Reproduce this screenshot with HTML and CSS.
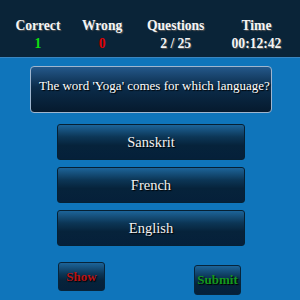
FILE: index.html
```html
<!DOCTYPE html>
<html>
<head>
<meta charset="utf-8">
<link rel="stylesheet" href="styles.css">
</head>
<body>
<div class="screen">
  <div class="stats">
    <table class="stats-table">
      <tr class="labels">
        <td>Correct</td><td>Wrong</td><td>Questions</td><td>Time</td>
      </tr>
      <tr class="values">
        <td class="good">1</td><td class="bad">0</td><td>2 / 25</td><td>00:12:42</td>
      </tr>
    </table>
  </div>
  <div class="question">The word 'Yoga' comes for which language?</div>
  <div class="options">
    <div class="option">Sanskrit</div>
    <div class="option">French</div>
    <div class="option">English</div>
  </div>
  <div class="actions">
    <div class="btn show">Show</div>
    <div class="btn submit">Submit</div>
  </div>
</div>
</body>
</html>
```
FILE: styles.css
```css
html, body {
  margin: 0;
  padding: 0;
}
body {
  background: #0f75bb;
  font-family: "Liberation Serif", "Times New Roman", serif;
  width: 300px;
  height: 300px;
  overflow: hidden;
}
.screen {
  width: 300px;
  height: 300px;
}
.stats {
  background: #0a2438;
  height: 58px;
  box-sizing: border-box;
  padding: 17px 6px 0 4px;
  border-bottom: 1px solid #3a86c0;
}
.stats-table {
  width: 100%;
  border-collapse: collapse;
}
.stats-table td {
  padding: 0;
  text-align: center;
  font-weight: bold;
  font-size: 13.6px;
  line-height: 18px;
  color: #f4f4f4;
  text-shadow: 1px 1px 1px #555;
}
.stats-table .good { color: #10e010; text-shadow: none; }
.stats-table .bad { color: #e00000; text-shadow: none; }
.question {
  margin: 8px 0 0 30px;
  width: 242px;
  height: 47px;
  box-sizing: border-box;
  border: 1px solid #9fb6cf;
  border-radius: 4px;
  background: linear-gradient(to bottom, #24588a 0%, #0b2c4a 45%, #061a2e 100%);
  color: #ffffff;
  font-size: 13px;
  white-space: nowrap;
  padding: 0 0 8px 8px;
  display: flex;
  align-items: center;
  text-shadow: 1px 1px 1px #000;
}
.options {
  margin: 11px 0 0 57px;
  width: 188px;
  display: flex;
  flex-direction: column;
  gap: 7px;
}
.option {
  height: 36px;
  box-sizing: border-box;
  border: 1px solid #062033;
  border-radius: 3px;
  background: linear-gradient(to bottom, #1d6499 0%, #0c3656 35%, #06233b 60%, #05203a 100%);
  color: #f2f2f2;
  font-size: 14.5px;
  display: flex;
  align-items: center;
  justify-content: center;
  text-shadow: 1px 1px 1px #000;
}
.actions {
  display: flex;
  align-items: flex-start;
  margin-left: 58px;
}
.btn {
  width: 47px;
  box-sizing: border-box;
  border: 1px solid #07243a;
  border-radius: 3px;
  background: linear-gradient(to bottom, #1d6499 0%, #0c3656 40%, #06233b 65%, #05203a 100%);
  font-size: 13px;
  font-weight: bold;
  display: flex;
  align-items: center;
  justify-content: center;
  text-shadow: 1px 1px 1px #000;
}
.show {
  height: 29px;
  margin-top: 16px;
  color: #b81418;
}
.submit {
  height: 30px;
  margin-top: 19px;
  margin-left: 89px;
  color: #149a1e;
}
```
